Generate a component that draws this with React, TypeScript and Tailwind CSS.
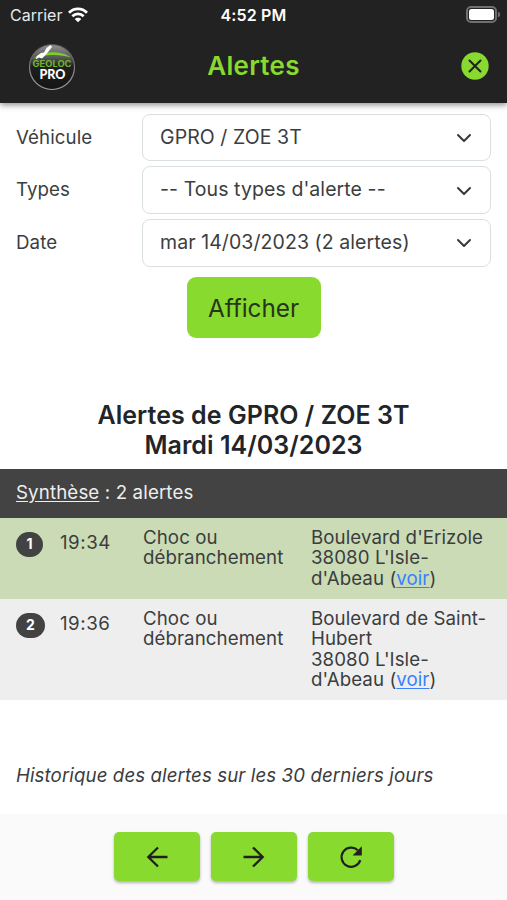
import React from "react";

function Logo() {
  return (
    <svg width="48" height="48" viewBox="0 0 48 48">
      <defs>
        <linearGradient id="ball" x1="0" y1="0" x2="0" y2="1">
          <stop offset="0" stopColor="#929292" />
          <stop offset="0.3" stopColor="#555555" />
          <stop offset="0.48" stopColor="#202020" />
          <stop offset="1" stopColor="#141414" />
        </linearGradient>
        <linearGradient id="rim" x1="0" y1="0" x2="0" y2="1">
          <stop offset="0" stopColor="#555555" />
          <stop offset="1" stopColor="#a5a5a5" />
        </linearGradient>
      </defs>
      <circle cx="24" cy="24" r="22.5" fill="url(#ball)" stroke="url(#rim)" strokeWidth="1.2" />
      <path d="M5 16 C13 7.5 33 7 43 14.5 C33 11 15 11 5 16Z" fill="#79cf2b" />
      <path d="M18.500 5 L22.500 2 L24 4 L18.500 11 L14 15.500 L11 14.500 L7.500 16.500 L9 13 L13 10 L16 9.500Z" fill="#fff" />
      <text x="24" y="23.800" textAnchor="middle" textLength="39" lengthAdjust="spacingAndGlyphs" fontFamily="Inter, sans-serif" fontSize="8.500" fontWeight="700" fill="#6fb52a">GEOLOC</text>
      <text x="24.500" y="36" textAnchor="middle" textLength="26" lengthAdjust="spacingAndGlyphs" fontFamily="Lato, sans-serif" fontSize="14" fontWeight="900" fill="#fff">PRO</text>
    </svg>
  );
}

function WifiIcon() {
  return (
    <svg width="20" height="16" viewBox="0 0 20 16" fill="none" stroke="#fff" strokeWidth="2.7">
      <path d="M1 5.700 C6 0.600 14 0.600 19 5.700" />
      <path d="M4.300 9.200 C7.500 6 12.500 6 15.700 9.200" />
      <path d="M10 15.300 L6.700 12 C8.500 10.200 11.500 10.200 13.300 12Z" fill="#fff" stroke="none" />
    </svg>
  );
}

function CloseIcon() {
  return (
    <svg width="28" height="28" viewBox="0 0 28 28">
      <circle cx="14" cy="14" r="13.700" fill="#89da2e" />
      <path d="m8.500 8.500 11 11 M19.500 8.500l-11 11" stroke="#222222" strokeWidth="2.100" strokeLinecap="round" />
    </svg>
  );
}

function ArrowIcon({ className = "" }: { className?: string }) {
  return (
    <svg className={className} width="24" height="24" viewBox="0 0 24 24" fill="none" stroke="#202020" strokeWidth="2.300">
      <path d="M13 2.500 3.300 12l9.700 9.500 M3.300 12h19.200" />
    </svg>
  );
}

function RefreshIcon() {
  return (
    <svg width="24" height="24" viewBox="0 0 24 24" fill="none">
      <path d="M21.300 15.200A9.600 9.600 0 1 1 18.800 5.200" stroke="#202020" strokeWidth="2.200" />
      <path d="M22.800 1.200v9.200h-9.200Z" fill="#202020" />
    </svg>
  );
}

function Field({ label, value }: { label: string; value: string }) {
  return (
    <div className="flex h-[47.500px] items-center">
      <div className="w-[126px] pt-[1px] text-[18.700px] tracking-[0.005em]">{label}</div>
      <div className="flex h-full flex-1 items-center justify-between rounded-lg border-[1.500px] border-[#dadfe2] bg-white pr-[18px] pl-[17px]">
        <span className="text-[19.500px] tracking-[0.004em] whitespace-nowrap">{value}</span>
        <svg className="mt-[1px]" width="16" height="16" viewBox="0 0 16 16" fill="none" stroke="#343a40" strokeWidth="2" strokeLinecap="round" strokeLinejoin="round">
          <path d="m2 5 6 6 6-6" />
        </svg>
      </div>
    </div>
  );
}

interface AlertProps {
  index: number;
  time: string;
  street: string[];
  rowClass: string;
  badgeClass: string;
}

function AlertRow({ index, time, street, rowClass, badgeClass }: AlertProps) {
  return (
    <div className={"flex items-start pt-[10px] pl-4 text-[18.700px] leading-[20.330px] tracking-[0.004em] " + rowClass}>
      <div className="w-11 pt-1">
        <div className={"flex h-[25px] items-center justify-center rounded-full bg-[#424242] text-[14px] font-bold text-white " + badgeClass}>{index}</div>
      </div>
      <div className="w-[83px] pt-[5.500px] tracking-[0.028em]">{time}</div>
      <div className="w-[168px] pt-[0.500px]">Choc ou<br />débranchement</div>
      <div className="pt-[0.500px] whitespace-nowrap">
        {street.map((line) => <div key={line}>{line}</div>)}
        <div>38080 L'Isle-</div>
        <div>d'Abeau (<a className="text-[#3880ff] underline underline-offset-2">voir</a>)</div>
      </div>
    </div>
  );
}

function ToolButton({ children }: { children: React.ReactNode }) {
  return (
    <button className="flex h-[49px] w-[86px] items-center justify-center rounded-[5px] bg-[#89da2e] shadow-[0_2px_3px_rgba(0,0,0,0.280)]">{children}</button>
  );
}

export default function App() {
  return (
    <div className="flex h-[900px] w-[507px] flex-col overflow-hidden bg-white font-['Inter',sans-serif] text-[#3b3d3e]">
      <header className="relative h-[103px] shrink-0 bg-[#222222] shadow-[0_2px_6px_rgba(0,0,0,0.450)]">
        <div className="grid h-[30px] grid-cols-3 items-center text-[16px] text-white">
          <div className="flex items-center gap-[6px] pl-[10px]">
            <span className="text-[#e8e8e8]">Carrier</span><WifiIcon />
          </div>
          <div className="text-center font-semibold tracking-[0.010em]">4:52 PM</div>
          <div className="flex items-center justify-end pr-[7px] pb-[2px]">
            <div className="h-[17px] w-[31px] rounded-[5px] border-2 border-[#707070] p-[1px]"><div className="h-full rounded-[2.500px] bg-white" /></div>
            <div className="ml-[1px] h-[5px] w-[2px] rounded-r-full bg-[#707070]" />
          </div>
        </div>
        <div className="grid h-[73px] grid-cols-3 items-center">
          <div className="pl-[28px]"><Logo /></div>
          <h1 className="pb-[2px] text-center text-[26px] font-semibold tracking-[0.012em] text-[#89da2e]">Alertes</h1>
          <div className="flex justify-end pr-[18px] pb-[1px]"><CloseIcon /></div>
        </div>
      </header>
      <main className="flex-1">
        <section className="flex flex-col gap-[5.250px] px-4 pt-[10.500px]">
          <Field label="Véhicule" value="GPRO / ZOE 3T" />
          <Field label="Types" value="-- Tous types d'alerte --" />
          <Field label="Date" value="mar 14/03/2023 (2 alertes)" />
        </section>
        <div className="flex justify-center pt-[10px]">
          <button className="h-[61px] w-[134px] rounded-[9px] bg-[#89da2e] pt-[2px] text-[24.300px] text-[#26351b]">Afficher</button>
        </div>
        <h2 className="pt-[62px] text-center text-[25px] leading-[30px] font-semibold tracking-[0.002em] text-[#212529]">Alertes de GPRO / ZOE 3T<br />Mardi 14/03/2023</h2>
        <div className="mt-[9px] flex h-[49px] items-center bg-[#434343] pl-4 text-[18.700px] tracking-[0.007em] text-[#eeeeee]">
          <span className="underline underline-offset-2">Synthèse</span><span className="whitespace-pre"> : 2 alertes</span>
        </div>
        <AlertRow index={1} time="19:34" street={["Boulevard d'Erizole"]} rowClass="h-[81px] bg-[#cadbb5]" badgeClass="w-[27px]" />
        <AlertRow index={2} time="19:36" street={["Boulevard de Saint-", "Hubert"]} rowClass="h-[101px] bg-[#eeeeee]" badgeClass="w-[29px]" />
        <p className="pt-[62px] pl-4 text-[18.700px] leading-[27px] tracking-[0.005em] italic">Historique des alertes sur les 30 derniers jours</p>
      </main>
      <footer className="flex h-[86px] shrink-0 justify-center gap-[11px] bg-[#fafafb] pt-[18px]">
        <ToolButton><ArrowIcon /></ToolButton>
        <ToolButton><ArrowIcon className="rotate-180" /></ToolButton>
        <ToolButton><RefreshIcon /></ToolButton>
      </footer>
    </div>
  );
}
